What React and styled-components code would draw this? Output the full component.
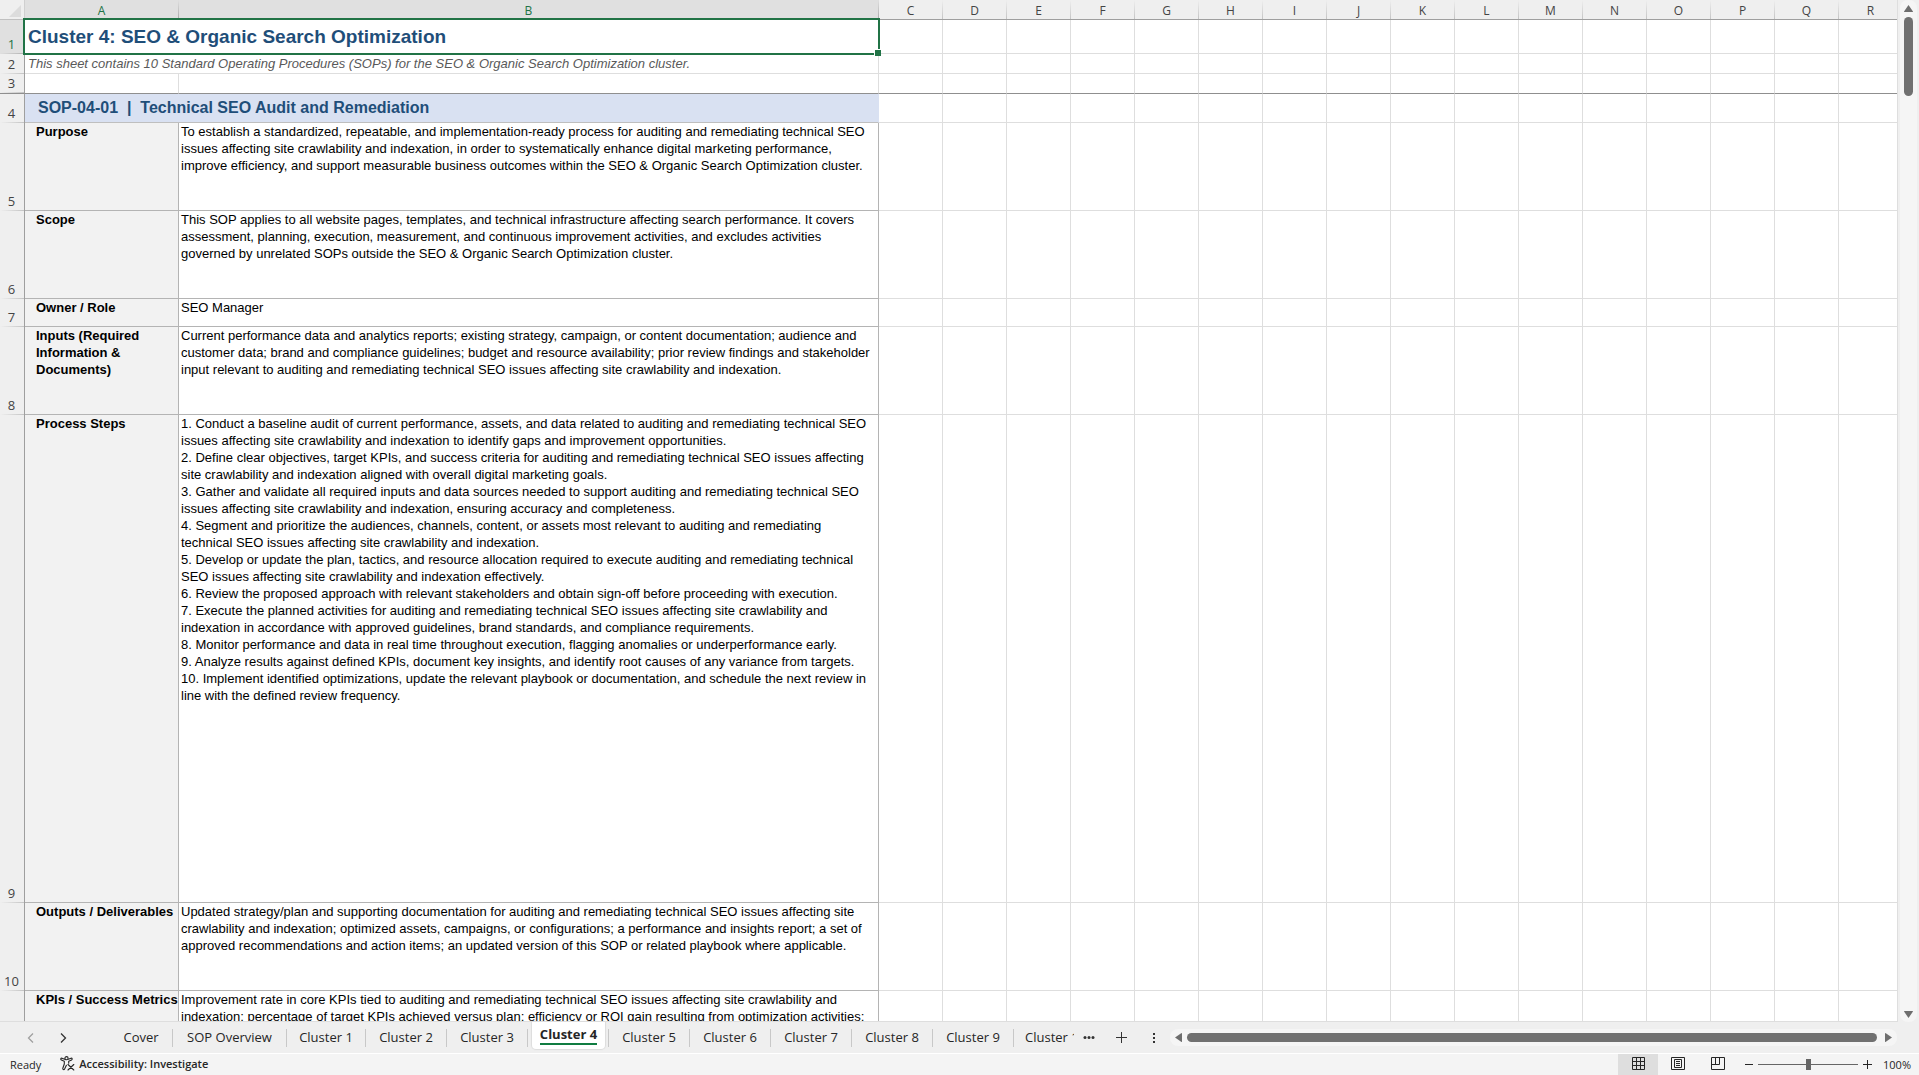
import React, { useState } from "react";
import styled, { createGlobalStyle } from "styled-components";

const OTHER_COLUMNS = "CDEFGHIJKLMNOPQR".split("");

const SOP_ROWS = [
  {
    num: 5,
    height: 88,
    label: "Purpose",
    lines: [
      "To establish a standardized, repeatable, and implementation-ready process for auditing and remediating technical SEO",
      "issues affecting site crawlability and indexation, in order to systematically enhance digital marketing performance,",
      "improve efficiency, and support measurable business outcomes within the SEO & Organic Search Optimization cluster.",
    ],
  },
  {
    num: 6,
    height: 88,
    label: "Scope",
    lines: [
      "This SOP applies to all website pages, templates, and technical infrastructure affecting search performance. It covers",
      "assessment, planning, execution, measurement, and continuous improvement activities, and excludes activities",
      "governed by unrelated SOPs outside the SEO & Organic Search Optimization cluster.",
    ],
  },
  { num: 7, height: 28, label: "Owner / Role", lines: ["SEO Manager"] },
  {
    num: 8,
    height: 88,
    label: "Inputs (Required Information & Documents)",
    wrap: true,
    lines: [
      "Current performance data and analytics reports; existing strategy, campaign, or content documentation; audience and",
      "customer data; brand and compliance guidelines; budget and resource availability; prior review findings and stakeholder",
      "input relevant to auditing and remediating technical SEO issues affecting site crawlability and indexation.",
    ],
  },
  {
    num: 9,
    height: 488,
    label: "Process Steps",
    lines: [
      "1. Conduct a baseline audit of current performance, assets, and data related to auditing and remediating technical SEO",
      "issues affecting site crawlability and indexation to identify gaps and improvement opportunities.",
      "2. Define clear objectives, target KPIs, and success criteria for auditing and remediating technical SEO issues affecting",
      "site crawlability and indexation aligned with overall digital marketing goals.",
      "3. Gather and validate all required inputs and data sources needed to support auditing and remediating technical SEO",
      "issues affecting site crawlability and indexation, ensuring accuracy and completeness.",
      "4. Segment and prioritize the audiences, channels, content, or assets most relevant to auditing and remediating",
      "technical SEO issues affecting site crawlability and indexation.",
      "5. Develop or update the plan, tactics, and resource allocation required to execute auditing and remediating technical",
      "SEO issues affecting site crawlability and indexation effectively.",
      "6. Review the proposed approach with relevant stakeholders and obtain sign-off before proceeding with execution.",
      "7. Execute the planned activities for auditing and remediating technical SEO issues affecting site crawlability and",
      "indexation in accordance with approved guidelines, brand standards, and compliance requirements.",
      "8. Monitor performance and data in real time throughout execution, flagging anomalies or underperformance early.",
      "9. Analyze results against defined KPIs, document key insights, and identify root causes of any variance from targets.",
      "10. Implement identified optimizations, update the relevant playbook or documentation, and schedule the next review in",
      "line with the defined review frequency.",
    ],
  },
  {
    num: 10,
    height: 88,
    label: "Outputs / Deliverables",
    lines: [
      "Updated strategy/plan and supporting documentation for auditing and remediating technical SEO issues affecting site",
      "crawlability and indexation; optimized assets, campaigns, or configurations; a performance and insights report; a set of",
      "approved recommendations and action items; an updated version of this SOP or related playbook where applicable.",
    ],
  },
  {
    num: null,
    height: 88,
    label: "KPIs / Success Metrics",
    lines: [
      "Improvement rate in core KPIs tied to auditing and remediating technical SEO issues affecting site crawlability and",
      "indexation; percentage of target KPIs achieved versus plan; efficiency or ROI gain resulting from optimization activities;",
    ],
  },
];

const SHEETS = [
  { name: "Cover", width: 63 },
  { name: "SOP Overview", width: 114 },
  { name: "Cluster 1", width: 79 },
  { name: "Cluster 2", width: 81 },
  { name: "Cluster 3", width: 81 },
  { name: "Cluster 4", width: 81 },
  { name: "Cluster 5", width: 81 },
  { name: "Cluster 6", width: 81 },
  { name: "Cluster 7", width: 81 },
  { name: "Cluster 8", width: 81 },
  { name: "Cluster 9", width: 81 },
];

/* -------------------- STYLES -------------------- */

const GlobalStyle = createGlobalStyle`
  * { box-sizing: border-box; }
  body { margin: 0; }
  button { border: none; background: none; padding: 0; font: inherit; color: inherit; }
`;

const Window = styled.div`
  height: 100vh;
  display: flex;
  flex-direction: column;
  overflow: hidden;
  background: #efefef;
  color: #262626;
  font-family: "Open Sans", "Noto Sans", sans-serif;
`;

const Main = styled.div`
  flex: 1;
  min-height: 0;
  display: flex;
`;

const GridArea = styled.div`
  flex: 1;
  min-width: 0;
  overflow: hidden;
  background: #fff;
  border-right: 1px solid #dedede;
  border-bottom: 1px solid #dedede;
`;

const Grid = styled.table`
  table-layout: fixed;
  width: 1903px;
  border-collapse: separate;
  border-spacing: 0;
`;

const Corner = styled.th`
  height: 20px;
  padding: 0;
  background: #efefef;
  border-right: 1px solid #d0d0d0;
  border-bottom: 1px solid #c0c0c0;

  svg {
    display: block;
    margin: 2px 0 0 9px;
  }
`;

const ColHead = styled.th`
  height: 20px;
  padding: 2px 1px 0 0;
  font-size: 12px;
  line-height: 17px;
  font-weight: 400;
  color: ${(p) => (p.$active ? "#217346" : "#444")};
  background: ${(p) =>
    p.$active
      ? "linear-gradient(#e0e0e0, #ababab) right / 1px 100% no-repeat #e0e0e0"
      : "linear-gradient(#efefef, #c4c4c4) right / 1px 100% no-repeat #efefef"};
  border-bottom: 1px solid #9f9f9f;
`;

const RowHead = styled.th`
  height: ${(p) => p.$height}px;
  padding: 0 1px 2px 0;
  font-size: 13px;
  line-height: 16px;
  font-weight: 400;
  vertical-align: bottom;
  color: ${(p) => (p.$active ? "#217346" : "#444")};
  background: ${(p) =>
    p.$active
      ? "linear-gradient(90deg, #e0e0e0, #b4b4b4) bottom / 100% 1px no-repeat #e0e0e0"
      : "linear-gradient(90deg, #efefef, #c4c4c4) bottom / 100% 1px no-repeat #efefef"};
  border-right: 1px solid #9f9f9f;
  border-bottom: ${(p) => (p.$frozen ? "1px solid #8f8f8f" : "none")};
`;

const Cell = styled.td`
  padding: 0;
  border-right: 1px solid #dedede;
  border-bottom: 1px solid ${(p) => (p.$frozen ? "#8f8f8f" : "#dedede")};
`;

const SheetCell = styled(Cell)`
  font-family: "Liberation Sans", Arial, sans-serif;
  white-space: nowrap;
`;

const TitleCell = styled(SheetCell)`
  position: relative;
  padding-left: 3px;
  font-size: 19px;
  line-height: 22px;
  font-weight: 700;
  color: #1f4e79;
`;

const Selection = styled.div`
  position: absolute;
  inset: -2px;
  border: 2px solid #217346;

  &::after {
    content: "";
    position: absolute;
    right: -3px;
    bottom: -3px;
    width: 6px;
    height: 6px;
    background: #217346;
    border-left: 1px solid #fff;
    border-top: 1px solid #fff;
  }
`;

const SubtitleCell = styled(SheetCell)`
  padding-left: 3px;
  font-size: 13px;
  line-height: 17px;
  font-style: italic;
  color: #595959;
`;

const SopCell = styled(SheetCell)`
  padding: 0 0 1px 13px;
  font-size: 16px;
  line-height: 20px;
  font-weight: 700;
  color: #1f4e79;
  background: #d9e1f2;
  border-right-color: #d9e1f2;
  border-bottom-color: #bfbfbf;
`;

const LabelCell = styled(SheetCell)`
  padding-left: 11px;
  font-size: 13px;
  line-height: 17px;
  font-weight: 700;
  color: #000;
  vertical-align: top;
  white-space: ${(p) => (p.$wrap ? "normal" : "nowrap")};
  background: #f2f2f2;
  border-color: #b4b4b4;
`;

const TextCell = styled(SheetCell)`
  padding-left: 2px;
  font-size: 13px;
  line-height: 17px;
  color: #000;
  vertical-align: top;
  border-color: #b4b4b4;
`;

const Line = styled.div``;

const VScroll = styled.div`
  width: 17px;
  margin: 0 2px;
  padding: 4px 0 3px;
  display: flex;
  flex-direction: column;
  align-items: center;
  justify-content: space-between;
  background: #f5f5f5;
  border-radius: 8px;
`;

const ScrollBtn = styled.button`
  display: flex;
  fill: #6e6e6e;
`;

const VTrack = styled.div`
  flex: 1;
  padding-top: 4px;
`;

const VThumb = styled.div`
  width: 9px;
  height: 79px;
  border-radius: 5px;
  background: #707070;
`;

const TabBar = styled.div`
  height: 31px;
  display: flex;
  align-items: center;
  padding-right: 22px;
`;

const TabNav = styled.div`
  width: 110px;
  display: flex;
  gap: 21px;
  padding-left: 25px;
`;

const IconBtn = styled.button`
  width: 12px;
  display: flex;
  justify-content: center;
  color: ${(p) => (p.$muted ? "#a0a0a0" : "#333")};
`;

const Tabs = styled.div`
  display: flex;
  align-self: stretch;
`;

const TabSlot = styled.div`
  width: ${(p) => p.$width}px;
  display: flex;
  padding-bottom: ${(p) => (p.$active ? 4 : 0)}px;
  background: linear-gradient(#c8c8c8, #c8c8c8) right 7px / 1px 18px no-repeat;
`;

const Tab = styled.button`
  flex: 1;
  margin: ${(p) => (p.$active ? "0 4px" : "0 1px 0 0")};
  padding-bottom: ${(p) => (p.$active ? 2 : 0)}px;
  font-size: 13px;
  line-height: 18px;
  font-weight: ${(p) => (p.$active ? 700 : 400)};
  white-space: nowrap;
  background: ${(p) => (p.$active ? "#fff" : "transparent")};
  border-radius: 0 0 4px 4px;
  box-shadow: ${(p) => (p.$active ? "0 0 1px 1px #dcdcdc" : "none")};

  span {
    display: inline-block;
    border-bottom: 2px solid ${(p) => (p.$active ? "#107c41" : "transparent")};
  }
`;

const CutTab = styled.button`
  width: 60px;
  padding: 0 0 2px 11px;
  font-size: 13px;
  line-height: 18px;
  text-align: left;

  span {
    display: block;
    overflow: hidden;
    white-space: nowrap;
  }
`;

const TabTools = styled.div`
  width: 96px;
  display: flex;
  justify-content: space-between;
  padding: 0 10px 0 9px;
`;

const HScroll = styled.div`
  flex: 1;
  height: 17px;
  display: flex;
  align-items: center;
  gap: 5px;
  padding: 0 5px;
  background: #f5f5f5;
  border-radius: 8px;
`;

const HThumb = styled.div`
  flex: 1;
  height: 9px;
  margin-right: 3px;
  border-radius: 5px;
  background: #707070;
`;

const StatusBar = styled.div`
  height: 22px;
  display: flex;
  align-items: center;
  padding: 0 8px 0 10px;
  font-size: 11px;
  background: #f4f4f4;
  border-top: 1px solid #fff;
`;

const StatusText = styled.span`
  line-height: 15px;
  padding-bottom: 1px;
`;

const AccessBtn = styled.button`
  display: flex;
  align-items: center;
  gap: 4px;
  margin-left: 19px;
  padding-bottom: 2px;
  font-weight: 600;
`;

const StatusRight = styled.div`
  margin-left: auto;
  display: flex;
  align-items: center;
  align-self: stretch;
`;

const ViewBtn = styled.button`
  width: 40px;
  align-self: stretch;
  display: flex;
  align-items: center;
  justify-content: center;
  padding-bottom: 2px;
  background: ${(p) => (p.$active ? "#dedede" : "transparent")};
`;

const ZoomGroup = styled.div`
  display: flex;
  align-items: center;
  gap: 3px;
  margin-left: 5px;
  padding-bottom: 1px;
`;

const ZoomSlider = styled.input`
  appearance: none;
  width: 100px;
  height: 12px;
  margin: 0;
  background: linear-gradient(#666, #666) center / 100% 1px no-repeat;

  &::-webkit-slider-thumb {
    appearance: none;
    width: 5px;
    height: 11px;
    background: #666;
  }
`;

const ZoomValue = styled.button`
  width: 28px;
  margin-left: 10px;
  padding-bottom: 1px;
  white-space: nowrap;
`;

/* -------------------- ICONS -------------------- */

const Chevron = ({ d }) => (
  <svg width="12" height="12" viewBox="0 0 12 12" fill="none" stroke="currentColor" strokeWidth="1.3">
    <path d={d} />
  </svg>
);

const AccessibilityIcon = () => (
  <svg width="15" height="15" viewBox="0 0 15 15" fill="none" stroke="#262626" strokeWidth="1.1" strokeLinecap="round" strokeLinejoin="round">
    <circle cx="6.5" cy="2.2" r="1.6" />
    <path d="M4.7 3.2 2 2.2C.8 1.9.3 3.4 1.4 3.9L4.3 5.2V8L2.8 12.3C2.5 13.6 4 14.2 4.6 13L6.4 9.3" />
    <path d="M8.3 3.2 11 2.2C12.2 1.9 12.7 3.4 11.6 3.9L8.7 5.2V7.2" />
    <path d="M8 8.5 13.8 14M13.8 8.5 8 14" />
  </svg>
);

/* -------------------- COMPONENT -------------------- */

function EmptyCells({ frozen }) {
  return OTHER_COLUMNS.map((col) => <Cell key={col} $frozen={frozen} />);
}

export default function App() {
  const [sheet, setSheet] = useState("Cluster 4");
  const [view, setView] = useState("Normal");
  const [zoom, setZoom] = useState(100);

  return (
    <Window>
      <GlobalStyle />

      <Main>
        <GridArea>
          <Grid>
            <colgroup>
              <col width="25" />
              <col width="154" />
              <col width="700" />
              {OTHER_COLUMNS.map((col) => (
                <col key={col} width="64" />
              ))}
            </colgroup>

            <thead>
              <tr>
                <Corner aria-label="Select all">
                  <svg width="12" height="12" viewBox="0 0 12 12">
                    <path d="M12 0V12H0Z" fill="#dcdcdc" />
                  </svg>
                </Corner>
                <ColHead $active>A</ColHead>
                <ColHead $active>B</ColHead>
                {OTHER_COLUMNS.map((col) => (
                  <ColHead key={col}>{col}</ColHead>
                ))}
              </tr>
            </thead>

            <tbody>
              <tr>
                <RowHead $height={34} $active>1</RowHead>
                <TitleCell colSpan={2}>
                  Cluster 4: SEO &amp; Organic Search Optimization
                  <Selection />
                </TitleCell>
                <EmptyCells />
              </tr>
              <tr>
                <RowHead $height={20}>2</RowHead>
                <SubtitleCell colSpan={2}>
                  This sheet contains 10 Standard Operating Procedures (SOPs) for the SEO &amp; Organic Search Optimization cluster.
                </SubtitleCell>
                <EmptyCells />
              </tr>
              <tr>
                <RowHead $height={20} $frozen>3</RowHead>
                <Cell $frozen />
                <Cell $frozen />
                <EmptyCells frozen />
              </tr>
              <tr>
                <RowHead $height={29}>4</RowHead>
                <SopCell colSpan={2}>SOP-04-01&nbsp; |&nbsp; Technical SEO Audit and Remediation</SopCell>
                <EmptyCells />
              </tr>

              {SOP_ROWS.map((row) => (
                <tr key={row.label}>
                  <RowHead $height={row.height}>{row.num}</RowHead>
                  <LabelCell $wrap={row.wrap}>{row.label}</LabelCell>
                  <TextCell>
                    {row.lines.map((line) => (
                      <Line key={line}>{line}</Line>
                    ))}
                  </TextCell>
                  <EmptyCells />
                </tr>
              ))}
            </tbody>
          </Grid>
        </GridArea>

        <VScroll>
          <ScrollBtn aria-label="Scroll up">
            <svg width="9" height="9" viewBox="0 0 9 9"><path d="M4.5 1 9 7.5Q9 8 8.5 8H.5Q0 8 0 7.5Z" /></svg>
          </ScrollBtn>
          <VTrack>
            <VThumb />
          </VTrack>
          <ScrollBtn aria-label="Scroll down">
            <svg width="9" height="9" viewBox="0 0 9 9"><path d="M4.5 8 9 1.5Q9 1 8.5 1H.5Q0 1 0 1.5Z" /></svg>
          </ScrollBtn>
        </VScroll>
      </Main>

      <TabBar>
        <TabNav>
          <IconBtn $muted aria-label="Previous sheet">
            <Chevron d="M8 1.5 3.5 6 8 10.5" />
          </IconBtn>
          <IconBtn aria-label="Next sheet">
            <Chevron d="M3 1.5 7.5 6 3 10.5" />
          </IconBtn>
        </TabNav>

        <Tabs>
          {SHEETS.map(({ name, width }) => (
            <TabSlot key={name} $width={width} $active={name === sheet}>
              <Tab $active={name === sheet} onClick={() => setSheet(name)}>
                <span>{name}</span>
              </Tab>
            </TabSlot>
          ))}
        </Tabs>
        <CutTab>
          <span>Cluster 10</span>
        </CutTab>

        <TabTools>
          <IconBtn aria-label="More sheets">
            <svg width="12" height="12" viewBox="0 0 12 12" fill="currentColor">
              <circle cx="2" cy="5.5" r="1.5" />
              <circle cx="6" cy="5.5" r="1.5" />
              <circle cx="10" cy="5.5" r="1.5" />
            </svg>
          </IconBtn>
          <IconBtn aria-label="New sheet">
            <svg width="12" height="12" viewBox="0 0 12 12" stroke="currentColor">
              <path d="M5.5 0V11M0 5.5H11" />
            </svg>
          </IconBtn>
          <IconBtn aria-label="Resize tabs">
            <svg width="12" height="12" viewBox="0 0 12 12" fill="currentColor">
              <path d="M5 1H7V3H5ZM5 5H7V7H5ZM5 9H7V11H5Z" />
            </svg>
          </IconBtn>
        </TabTools>

        <HScroll>
          <ScrollBtn aria-label="Scroll left">
            <svg width="7" height="9" viewBox="0 0 7 9"><path d="M0 4.5 6.5 0Q7 0 7 .5V8.5Q7 9 6.5 9Z" /></svg>
          </ScrollBtn>
          <HThumb />
          <ScrollBtn aria-label="Scroll right">
            <svg width="7" height="9" viewBox="0 0 7 9"><path d="M7 4.5 .5 0Q0 0 0 .5V8.5Q0 9 .5 9Z" /></svg>
          </ScrollBtn>
        </HScroll>
      </TabBar>

      <StatusBar>
        <StatusText>Ready</StatusText>
        <AccessBtn>
          <AccessibilityIcon />
          Accessibility: Investigate
        </AccessBtn>

        <StatusRight>
          <ViewBtn aria-label="Normal" $active={view === "Normal"} onClick={() => setView("Normal")}>
            <svg width="13" height="13" viewBox="0 0 13 13" fill="none" stroke="#262626">
              <path d="M.5 .5H12.5V12.5H.5ZM4.5 .5V12.5M8.5 .5V12.5M.5 4.5H12.5M.5 8.5H12.5" />
            </svg>
          </ViewBtn>
          <ViewBtn aria-label="Page Layout" $active={view === "Layout"} onClick={() => setView("Layout")}>
            <svg width="14" height="13" viewBox="0 0 14 13" fill="none" stroke="#262626">
              <path d="M.5 .5H13.5V12.5H.5ZM3.5 2.5H10.5V10.5H3.5ZM5 4.5H9M5 6.5H9M5 8.5H9" />
            </svg>
          </ViewBtn>
          <ViewBtn aria-label="Page Break Preview" $active={view === "Break"} onClick={() => setView("Break")}>
            <svg width="14" height="13" viewBox="0 0 14 13" fill="none" stroke="#262626">
              <path d="M.5 .5H13.5V12.5H.5ZM.5 7.5H8.5V.5M4.5 .5V7.5" />
            </svg>
          </ViewBtn>
          <ZoomGroup>
            <IconBtn aria-label="Zoom out" onClick={() => setZoom(Math.max(10, zoom - 10))}>
              <svg width="9" height="9" viewBox="0 0 9 9" stroke="#262626"><path d="M0 4.5H8" /></svg>
            </IconBtn>
            <ZoomSlider
              type="range"
              aria-label="Zoom"
              min="0"
              max="200"
              value={zoom}
              onChange={(e) => setZoom(Number(e.target.value))}
            />
            <IconBtn aria-label="Zoom in" onClick={() => setZoom(Math.min(200, zoom + 10))}>
              <svg width="9" height="9" viewBox="0 0 9 9" stroke="#262626"><path d="M0 4.5H9M4.5 0V9" /></svg>
            </IconBtn>
          </ZoomGroup>
          <ZoomValue>{zoom}%</ZoomValue>
        </StatusRight>
      </StatusBar>
    </Window>
  );
}
